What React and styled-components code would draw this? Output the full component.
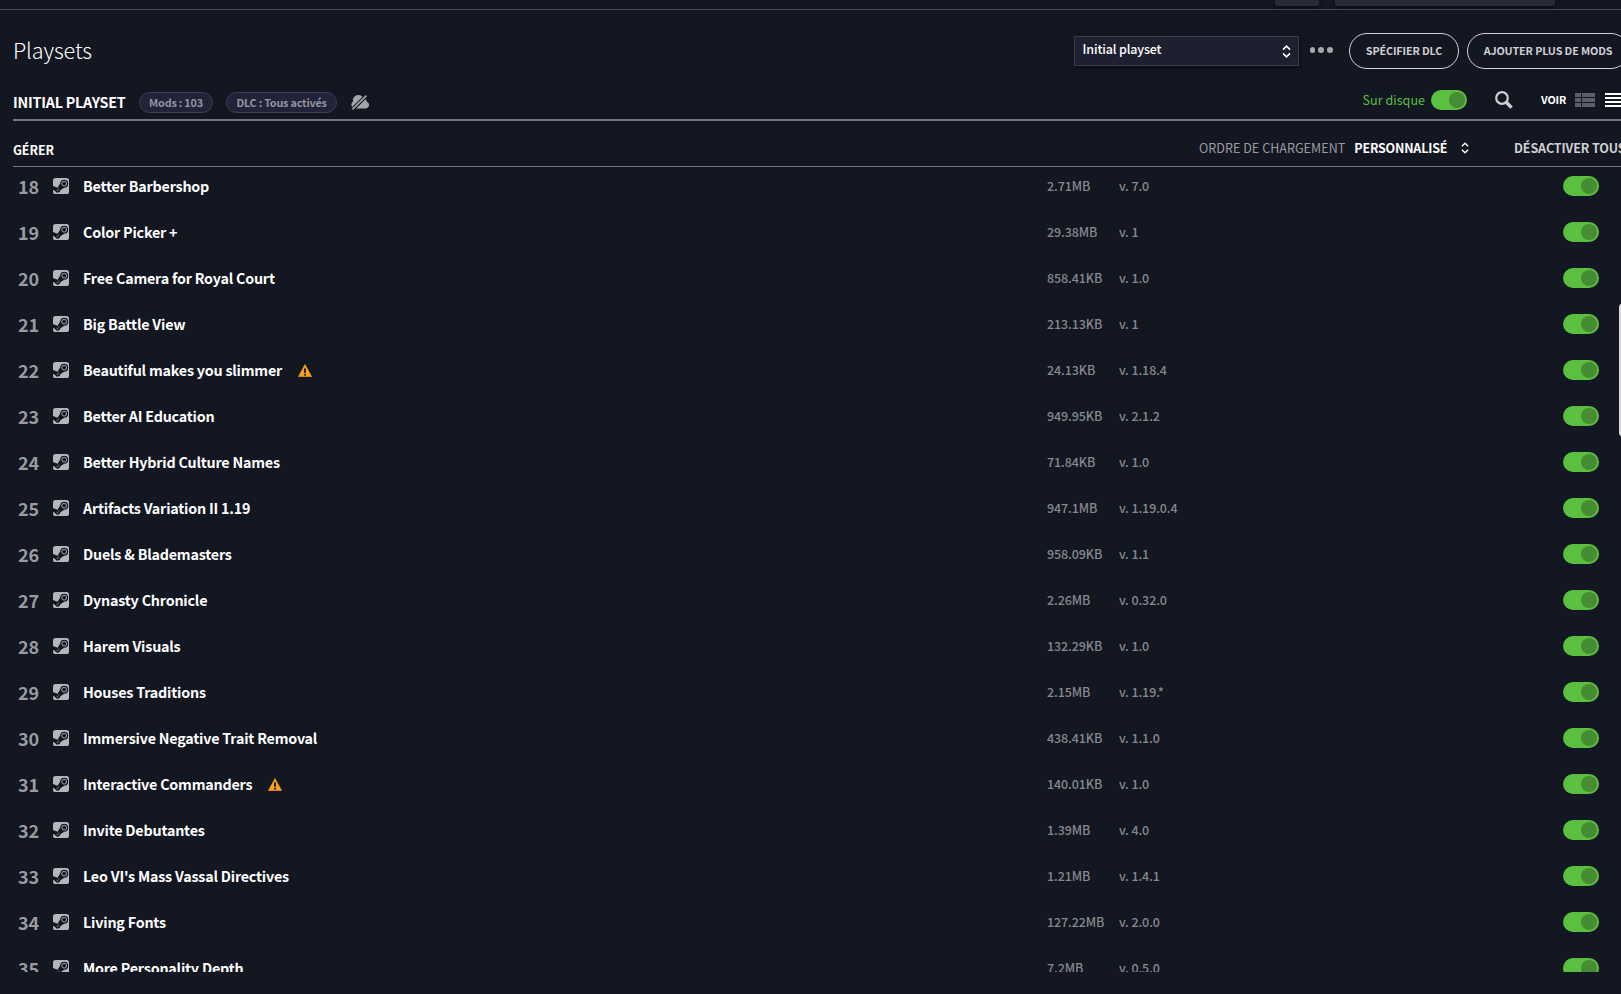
import React, { useState } from "react";
import styled, { createGlobalStyle, ThemeProvider } from "styled-components";

const theme = {
  colors: {
    bg: "#131722",
    text: "#ffffff",
    soft: "#cfd0d3",
    muted: "#9a9ba1",
    dim: "#85878d",
    line: "#74757f",
    green: "#5bbf40",
    knob: "#468c32",
    warning: "#f9a01f",
  },
};

const GlobalStyle = createGlobalStyle`
  * {
    box-sizing: border-box;
    margin: 0;
    padding: 0;
  }

  body {
    background: #131722;
    font-family: "Noto Sans CJK SC", "Noto Sans", sans-serif;
    overflow: hidden;
  }

  svg {
    display: block;
    flex-shrink: 0;
  }

  button {
    background: none;
    border: none;
    color: inherit;
    font: inherit;
    letter-spacing: inherit;
    cursor: pointer;
  }
`;

const Page = styled.div`
  position: relative;
  height: 994px;
  overflow: hidden;
  background: ${({ theme }) => theme.colors.bg};
  color: ${({ theme }) => theme.colors.text};
`;

const TopBar = styled.div`
  display: flex;
  gap: 16px;
  height: 10px;
  padding-left: 1275px;
  border-bottom: 1px solid #4a4b56;
`;

const TopTab = styled.div`
  width: ${({ $width }) => $width}px;
  height: 6px;
  border-radius: 0 0 3px 3px;
  background: #292a36;
  box-shadow: 0 2px 4px rgba(0, 0, 0, 0.5);
`;

const Content = styled.main`
  width: 1616px;
  margin-left: 13px;
`;

const Header = styled.header`
  display: flex;
  align-items: center;
  height: 72px;
  padding-top: 10px;

  h1 {
    flex: 1;
    padding-bottom: 3px;
    font-size: 21.6px;
    font-weight: 300;
    letter-spacing: -0.1px;
    line-height: 30px;
  }
`;

const Select = styled.button`
  display: flex;
  align-items: center;
  justify-content: space-between;
  width: 225px;
  height: 30px;
  padding: 0 7px 0 8px;
  border: 1px solid #3c3d4a;
  background: #1e2030;
  box-shadow: 0 2px 4px rgba(0, 0, 0, 0.45);
  font-size: 12.5px;
  font-weight: 500;
  letter-spacing: -0.15px;
  line-height: 18px;

  span {
    padding-bottom: 4px;
  }
`;

const MoreButton = styled.button`
  display: flex;
  gap: 3px;
  margin: -2px 16px 0 11px;

  i {
    width: 5.8px;
    height: 5.8px;
    border-radius: 50%;
    background: #a5a6aa;
  }
`;

const PillButton = styled.button`
  width: ${({ $width }) => $width}px;
  height: 36px;
  margin-left: ${({ $gap }) => $gap || 0}px;
  border: 1px solid #d2d3d5;
  border-radius: 18px;
  color: ${({ theme }) => theme.colors.soft};
  font-size: 10.75px;
  font-weight: 700;
  letter-spacing: -0.12px;
  line-height: 34px;
  white-space: nowrap;
`;

const SubHeader = styled.section`
  display: flex;
  justify-content: space-between;
  height: 39px;
  border-bottom: 2px solid ${({ theme }) => theme.colors.line};
`;

const PlaysetInfo = styled.div`
  display: flex;
  align-items: center;
  padding-top: 4px;

  h2 {
    width: 126px;
    padding-bottom: 2px;
    font-size: 14.3px;
    font-weight: 700;
    letter-spacing: -0.21px;
    line-height: 20px;
    white-space: nowrap;
  }

  svg {
    margin-left: 1px;
  }
`;

const Badge = styled.span`
  width: ${({ $width }) => $width}px;
  height: 21px;
  margin-right: 13px;
  border: 1px solid #3f404e;
  border-radius: 11px;
  background: #222338;
  color: #9394a0;
  font-size: 10.8px;
  font-weight: 700;
  letter-spacing: -0.2px;
  line-height: 19px;
  text-align: center;
  white-space: nowrap;
`;

const ViewControls = styled.div`
  display: flex;
  align-items: center;
  padding-bottom: 1px;
  padding-right: 4px;
`;

const DiskLabel = styled.span`
  margin-right: 6px;
  padding-bottom: 1px;
  color: ${({ theme }) => theme.colors.green};
  font-size: 12.6px;
  line-height: 18px;
`;

const ViewLabel = styled.span`
  width: 34px;
  margin-left: 28px;
  font-size: 10.75px;
  font-weight: 700;
  letter-spacing: -0.15px;
  line-height: 18px;
`;

const ListIcon = styled.span`
  margin-left: 10px;
`;

const SearchButton = styled.button`
  margin-left: 28px;
`;

const Track = styled.button`
  display: flex;
  align-items: center;
  justify-content: ${({ $on }) => ($on ? "flex-end" : "flex-start")};
  width: 36px;
  height: 20px;
  padding: 0 2px;
  border-radius: 10px;
  background: ${({ theme, $on }) => ($on ? theme.colors.green : "#4a4b56")};

  i {
    width: 16px;
    height: 16px;
    border-radius: 50%;
    background: ${({ theme, $on }) => ($on ? theme.colors.knob : "#777")};
  }
`;

const Columns = styled.section`
  display: flex;
  height: 46px;
  border-bottom: 1px solid ${({ theme }) => theme.colors.line};
  font-size: 12.5px;
  line-height: 20px;
  white-space: nowrap;
`;

const Manage = styled.strong`
  width: 1186px;
  padding-top: 19px;
  letter-spacing: -0.1px;
`;

const LoadOrder = styled.div`
  display: flex;
  width: 315px;
  padding-top: 17px;
  color: ${({ theme }) => theme.colors.muted};
  letter-spacing: 0.05px;

  strong {
    width: 107px;
    margin-left: 9px;
    color: ${({ theme }) => theme.colors.text};
    letter-spacing: -0.2px;
  }

  svg {
    margin-top: 4px;
  }
`;

const DisableAll = styled.strong`
  padding-top: 17px;
  color: ${({ theme }) => theme.colors.soft};
  letter-spacing: -0.1px;
`;

const List = styled.ul`
  height: 805px;
  overflow: hidden;
  list-style: none;
`;

const Row = styled.li`
  display: grid;
  grid-template-columns: 40px 30px 964px 72px 444px 36px;
  align-items: center;
  height: 46px;
  white-space: nowrap;

  &:first-child {
    margin-top: -4px;
  }
`;

const Order = styled.span`
  padding-left: 5px;
  color: ${({ theme }) => theme.colors.muted};
  font-size: 18px;
  font-weight: 600;
  line-height: 26px;
`;

const Source = styled.span`
  padding-left: 0;
`;

const Name = styled.span`
  display: flex;
  align-items: center;
  gap: 16px;
  font-size: 14.3px;
  font-weight: 700;
  letter-spacing: -0.2px;
  line-height: 22px;
`;

const Detail = styled.span`
  color: ${({ theme }) => theme.colors.dim};
  font-size: 12.5px;
  font-weight: 500;
  letter-spacing: -0.1px;
  line-height: 20px;
`;

const ScrollThumb = styled.div`
  position: absolute;
  top: 304px;
  right: -4px;
  width: 6px;
  height: 132px;
  border-radius: 3px;
  background: #d9d9db;
`;

const mods = [
  { name: "Better Barbershop", size: "2.71MB", version: "7.0" },
  { name: "Color Picker +", size: "29.38MB", version: "1" },
  { name: "Free Camera for Royal Court", size: "858.41KB", version: "1.0" },
  { name: "Big Battle View", size: "213.13KB", version: "1" },
  { name: "Beautiful makes you slimmer", size: "24.13KB", version: "1.18.4", outdated: true },
  { name: "Better AI Education", size: "949.95KB", version: "2.1.2" },
  { name: "Better Hybrid Culture Names", size: "71.84KB", version: "1.0" },
  { name: "Artifacts Variation II 1.19", size: "947.1MB", version: "1.19.0.4" },
  { name: "Duels & Blademasters", size: "958.09KB", version: "1.1" },
  { name: "Dynasty Chronicle", size: "2.26MB", version: "0.32.0" },
  { name: "Harem Visuals", size: "132.29KB", version: "1.0" },
  { name: "Houses Traditions", size: "2.15MB", version: "1.19.*" },
  { name: "Immersive Negative Trait Removal", size: "438.41KB", version: "1.1.0" },
  { name: "Interactive Commanders", size: "140.01KB", version: "1.0", outdated: true },
  { name: "Invite Debutantes", size: "1.39MB", version: "4.0" },
  { name: "Leo VI's Mass Vassal Directives", size: "1.21MB", version: "1.4.1" },
  { name: "Living Fonts", size: "127.22MB", version: "2.0.0" },
  { name: "More Personality Depth", size: "7.2MB", version: "0.5.0" },
];

const FIRST_ORDER = 18;

const SortIcon = ({ width = 9, height = 13 }) => (
  <svg width={width} height={height} viewBox="0 0 9 13" fill="none" stroke="#fff" strokeWidth="1.6">
    <path d="M1 4.6 L4.5 1.2 L8 4.6" />
    <path d="M1 8.4 L4.5 11.8 L8 8.4" />
  </svg>
);

const SteamIcon = () => (
  <svg width="16" height="16" viewBox="0 0 16 16">
    <rect width="16" height="16" rx="2.6" fill="#b5b6bb" />
    <path d="M0 8 L4.6 9.8 L7.2 5.6 A4 4 0 1 1 11.2 9.7 L7.4 12.2 A2.7 2.7 0 0 1 2.2 12.9 L0 11.9 Z" fill="#131722" />
    <circle cx="11.2" cy="5.7" r="2.4" fill="none" stroke="#b5b6bb" strokeWidth="0.9" />
    <path d="M3.2 12.1 L4.6 12.7 A1.4 1.4 0 0 0 5.4 10.4" fill="none" stroke="#8b8d93" strokeWidth="0.7" />
  </svg>
);

const CloudOffIcon = () => (
  <svg width="18" height="15" viewBox="0 0 18 15">
    <path
      d="M3.6 13.4 A3.9 3.9 0 0 1 2 6.4 A5.4 5.4 0 0 1 12.4 3.6 A3.8 3.8 0 0 1 15.8 6.8 A3.4 3.4 0 0 1 14.6 13.4 Z"
      fill="#a3a4a9"
    />
    <path d="M0.6 15.4 L16.2 -0.2" stroke="#131722" strokeWidth="3.8" />
    <path d="M1.4 14.4 L15.4 0.6" stroke="#a3a4a9" strokeWidth="1.7" />
  </svg>
);

const SearchIcon = () => (
  <svg width="18" height="18" viewBox="0 0 18 18" fill="none" stroke="#cfd0d3">
    <circle cx="7" cy="7" r="5.8" strokeWidth="2.2" />
    <path d="M11.2 11.2 L16.6 16.6" strokeWidth="3.4" />
  </svg>
);

const DetailedViewIcon = () => (
  <svg width="20" height="14" fill="#5d5f68">
    {[0, 5, 10].map((y) => (
      <g key={y}>
        <rect y={y} width="6" height="4" />
        <rect x="7" y={y} width="13" height="4" />
      </g>
    ))}
  </svg>
);

const CompactViewIcon = () => (
  <svg width="20" height="14" fill="#fff">
    {[0, 4, 8, 12].map((y) => (
      <rect key={y} y={y} width="20" height="2" />
    ))}
  </svg>
);

const WarningIcon = () => (
  <svg width="14" height="13" viewBox="0 0 14 13">
    <path
      d="M7 0.3 L13.8 12.7 H0.2 Z"
      fill={theme.colors.warning}
      stroke={theme.colors.warning}
      strokeWidth="0.4"
      strokeLinejoin="round"
    />
    <rect x="6.1" y="4.4" width="1.8" height="4.4" fill="#131722" />
    <rect x="6.1" y="9.8" width="1.8" height="1.8" fill="#131722" />
  </svg>
);

const Toggle = () => {
  const [on, setOn] = useState(true);

  return (
    <Track $on={on} onClick={() => setOn(!on)} aria-pressed={on}>
      <i />
    </Track>
  );
};

const App = () => {
  return (
    <ThemeProvider theme={theme}>
      <GlobalStyle />
      <Page>
        <TopBar>
          <TopTab $width={44} />
          <TopTab $width={220} />
        </TopBar>

        <Content>
          <Header>
            <h1>Playsets</h1>
            <Select>
              <span>Initial playset</span>
              <SortIcon />
            </Select>
            <MoreButton aria-label="Plus">
              <i />
              <i />
              <i />
            </MoreButton>
            <PillButton $width={110}>SPÉCIFIER DLC</PillButton>
            <PillButton $width={162} $gap={8}>
              AJOUTER PLUS DE MODS
            </PillButton>
          </Header>

          <SubHeader>
            <PlaysetInfo>
              <h2>INITIAL PLAYSET</h2>
              <Badge $width={74}>Mods : 103</Badge>
              <Badge $width={111}>DLC : Tous activés</Badge>
              <CloudOffIcon />
            </PlaysetInfo>
            <ViewControls>
              <DiskLabel>Sur disque</DiskLabel>
              <Toggle />
              <SearchButton aria-label="Rechercher">
                <SearchIcon />
              </SearchButton>
              <ViewLabel>VOIR</ViewLabel>
              <DetailedViewIcon />
              <ListIcon>
                <CompactViewIcon />
              </ListIcon>
            </ViewControls>
          </SubHeader>

          <Columns>
            <Manage>GÉRER</Manage>
            <LoadOrder>
              ORDRE DE CHARGEMENT
              <strong>PERSONNALISÉ</strong>
              <SortIcon width={8} height={12} />
            </LoadOrder>
            <DisableAll>DÉSACTIVER TOUS</DisableAll>
          </Columns>

          <List>
            {mods.map((mod, index) => (
              <Row key={mod.name}>
                <Order>{FIRST_ORDER + index}</Order>
                <Source>
                  <SteamIcon />
                </Source>
                <Name>
                  {mod.name}
                  {mod.outdated && <WarningIcon />}
                </Name>
                <Detail>{mod.size}</Detail>
                <Detail>v. {mod.version}</Detail>
                <Toggle />
              </Row>
            ))}
          </List>
        </Content>

        <ScrollThumb />
      </Page>
    </ThemeProvider>
  );
};

export default App;
